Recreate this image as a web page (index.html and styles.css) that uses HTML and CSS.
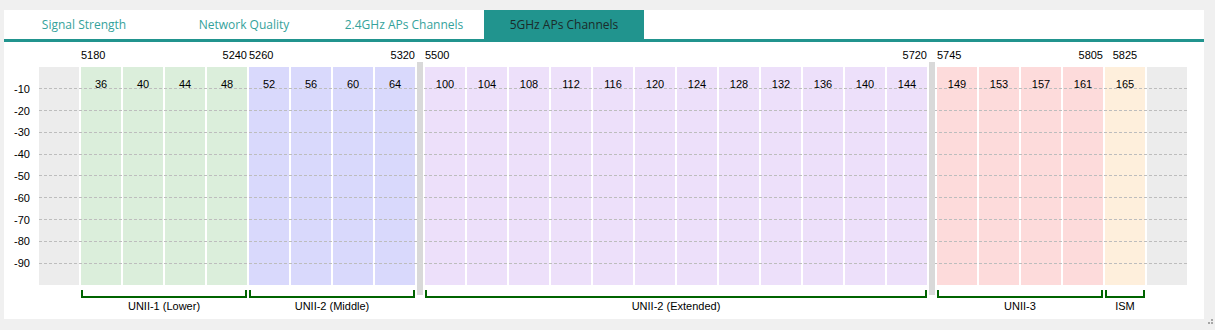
FILE: index.html
```html
<!DOCTYPE html>
<html lang="en">
<head>
    <meta charset="UTF-8">
    <title>5GHz APs Channels</title>
    <link rel="stylesheet" href="styles.css">
</head>
<body>
    <div class="panel">
        <ul class="tabs">
            <li>Signal Strength</li>
            <li>Network Quality</li>
            <li>2.4GHz APs Channels</li>
            <li class="active">5GHz APs Channels</li>
        </ul>

        <div class="chart">
            <div class="yaxis">
                <span>-10</span><span>-20</span><span>-30</span>
                <span>-40</span><span>-50</span><span>-60</span>
                <span>-70</span><span>-80</span><span>-90</span>
            </div>

            <div class="plot">
                <div class="grid">
                    <i></i><i></i><i></i><i></i><i></i><i></i><i></i><i></i><i></i>
                </div>

                <div class="band">
                    <div class="freq"></div>
                    <div class="cols"><div class="col off"></div></div>
                </div>

                <div class="band">
                    <div class="freq"><span>5180</span><span>5240</span></div>
                    <div class="cols">
                        <div class="col green">36</div>
                        <div class="col green">40</div>
                        <div class="col green">44</div>
                        <div class="col green">48</div>
                    </div>
                    <div class="bracket"></div>
                    <div class="name">UNII-1 (Lower)</div>
                </div>

                <div class="band">
                    <div class="freq"><span>5260</span><span>5320</span></div>
                    <div class="cols">
                        <div class="col blue">52</div>
                        <div class="col blue">56</div>
                        <div class="col blue">60</div>
                        <div class="col blue">64</div>
                    </div>
                    <div class="bracket"></div>
                    <div class="name">UNII-2 (Middle)</div>
                </div>

                <div class="sep"></div>

                <div class="band">
                    <div class="freq"><span>5500</span><span>5720</span></div>
                    <div class="cols">
                        <div class="col violet">100</div>
                        <div class="col violet">104</div>
                        <div class="col violet">108</div>
                        <div class="col violet">112</div>
                        <div class="col violet">116</div>
                        <div class="col violet">120</div>
                        <div class="col violet">124</div>
                        <div class="col violet">128</div>
                        <div class="col violet">132</div>
                        <div class="col violet">136</div>
                        <div class="col violet">140</div>
                        <div class="col violet">144</div>
                    </div>
                    <div class="bracket"></div>
                    <div class="name">UNII-2 (Extended)</div>
                </div>

                <div class="sep"></div>

                <div class="band">
                    <div class="freq"><span>5745</span><span>5805</span></div>
                    <div class="cols">
                        <div class="col red">149</div>
                        <div class="col red">153</div>
                        <div class="col red">157</div>
                        <div class="col red">161</div>
                    </div>
                    <div class="bracket"></div>
                    <div class="name">UNII-3</div>
                </div>

                <div class="band">
                    <div class="freq single"><span>5825</span></div>
                    <div class="cols"><div class="col orange">165</div></div>
                    <div class="bracket"></div>
                    <div class="name">ISM</div>
                </div>

                <div class="band">
                    <div class="freq"></div>
                    <div class="cols"><div class="col off"></div></div>
                </div>
            </div>
        </div>
    </div>

    <svg class="grip" width="7" height="7" viewBox="0 0 7 7">
        <rect x="4" y="0" width="2" height="2" fill="#a6a6a6"/>
        <rect x="1" y="3" width="2" height="2" fill="#a6a6a6"/>
        <rect x="4" y="3" width="2" height="2" fill="#a6a6a6"/>
    </svg>
</body>
</html>
```

FILE: styles.css
```css
* {
    margin: 0;
    padding: 0;
    box-sizing: border-box;
}
body {
    background: #f0f0f0;
    font-family: "Liberation Sans", Arial, sans-serif;
    font-size: 11px;
    color: #000;
    position: relative;
    width: 1215px;
    height: 330px;
    overflow: hidden;
}
.panel {
    background: white;
    width: 1200px;
    height: 309px;
    margin: 10px 0 0 4px;
}
.tabs {
    list-style: none;
    display: flex;
    height: 32px;
    border-bottom: 3px solid #21948e;
}
.tabs li {
    width: 160px;
    text-align: center;
    line-height: 29px;
    font-family: "Open Sans", "Noto Sans", sans-serif;
    font-size: 12px;
    color: #35a29b;
}
.tabs li.active {
    background: #21948e;
    color: #1b2b2a;
}
.chart {
    display: flex;
}
.yaxis {
    width: 35px;
    margin-top: 25px;
    height: 218px;
    padding-top: 10.9px;
    display: flex;
    flex-direction: column;
}
.yaxis span {
    height: 21.8px;
    line-height: 23px;
    padding-left: 10px;
}
.plot {
    position: relative;
    display: flex;
    gap: 2px;
}
.grid {
    position: absolute;
    left: 0;
    right: 0;
    top: 25px;
    height: 218px;
    z-index: 1;
    display: flex;
    flex-direction: column;
    padding-top: 21.3px;
    gap: 20.8px;
    pointer-events: none;
}
.grid i {
    display: block;
    height: 1px;
    background: repeating-linear-gradient(to right, #bdbdbd 0 3px, transparent 3px 5px);
}
.band {
    display: flex;
    flex-direction: column;
}
.freq {
    height: 25px;
    padding-top: 7px;
    line-height: 13px;
    display: flex;
    justify-content: space-between;
    white-space: nowrap;
}
.freq.single {
    justify-content: center;
}
.cols {
    display: flex;
    gap: 2px;
    height: 218px;
}
.col {
    width: 40px;
    text-align: center;
    padding-top: 10px;
    line-height: 14px;
}
.col.off { background: #ececec; }
.col.green { background: #dbeedb; }
.col.blue { background: #d9d9fc; }
.col.violet { background: #ede0fa; }
.col.red { background: #fddbdb; }
.col.orange { background: #feefdc; }
.bracket {
    margin-top: 5px;
    height: 8px;
    border: 2px solid #006400;
    border-top: none;
}
.name {
    margin-top: 1px;
    line-height: 14px;
    text-align: center;
    white-space: nowrap;
}
.sep {
    position: relative;
    z-index: 2;
    width: 6px;
    margin-top: 20px;
    height: 233px;
    background: #d9d9d9;
}
.grip {
    position: absolute;
    right: 1px;
    bottom: 4px;
}
```
